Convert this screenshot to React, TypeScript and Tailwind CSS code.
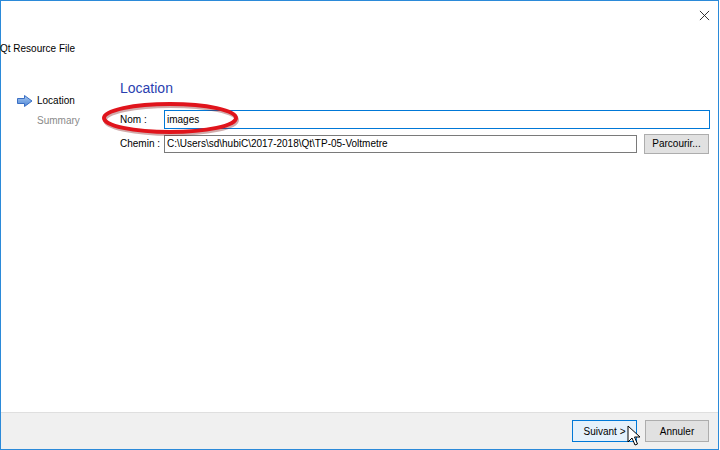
import { useState } from 'react'

const font = { fontFamily: '"Liberation Sans", Arial, sans-serif' }

export default function App() {
  const [name, setName] = useState('images')
  const [path, setPath] = useState('C:\\Users\\sd\\hubiC\\2017-2018\\Qt\\TP-05-Voltmetre')

  return (
    <div className="relative w-[720px] h-[450px] bg-white overflow-hidden" style={font}>
      <div className="w-[719px] h-[450px] border border-[#2b8ad9] flex flex-col">
        {/* title area */}
        <div className="relative h-[62px] shrink-0">
          <button className="absolute right-[7px] top-[8px] w-[12px] h-[12px] text-[#222]">
            <svg viewBox="0 0 12 12" className="w-[11px] h-[11px]" fill="none" stroke="currentColor" strokeWidth={1}>
              <path d="M1 1l10 10M11 1L1 11" />
            </svg>
          </button>
          <div className="absolute left-[-1px] top-[40px] text-[10px] text-black leading-[16px]">Qt Resource File</div>
        </div>

        <div className="flex flex-1">
          {/* sidebar */}
          <div className="w-[119px] shrink-0 pl-[16px] pt-[28px] text-[10px] leading-[20px]">
            <div className="flex items-center gap-[4px]">
              <svg width="16" height="12" viewBox="0 0 16 12">
                <defs>
                  <linearGradient id="ar" x1="0" y1="0" x2="0" y2="1">
                    <stop offset="0" stopColor="#a8c8f0" />
                    <stop offset="1" stopColor="#4d86d6" />
                  </linearGradient>
                </defs>
                <path d="M0.5 3.5h7v-3l7.5 5.5-7.5 5.5v-3h-7z" fill="url(#ar)" stroke="#3a6fc4" strokeWidth="1" />
              </svg>
              <span className="text-black">Location</span>
            </div>
            <div className="pl-[20px] text-[#8a8a8a]">Summary</div>
          </div>

          {/* content */}
          <div className="flex-1 pr-[8px] pt-[15px]">
            <div className="text-[14px] leading-[20px] text-[#2a3fb0] mb-[12px]">Location</div>
            <div className="flex items-center h-[19px] mb-[5px] text-[10px]">
              <label className="w-[44px] shrink-0 whitespace-nowrap">Nom :</label>
              <input
                value={name}
                onChange={(e) => setName(e.target.value)}
                className="flex-1 h-[19px] border border-[#0078d7] px-[2px] text-[10px] outline-none"
                style={font}
              />
            </div>
            <div className="flex items-center h-[19px] text-[10px]">
              <label className="w-[44px] shrink-0 whitespace-nowrap">Chemin :</label>
              <input
                value={path}
                onChange={(e) => setPath(e.target.value)}
                className="w-[473px] h-[18px] border border-[#7a7a7a] px-[2px] text-[10px] outline-none"
                style={font}
              />
              <button className="ml-[7px] w-[65px] h-[20px] border border-[#adadad] bg-[#e1e1e1] text-[10px]">
                Parcourir...
              </button>
            </div>
          </div>
        </div>

        {/* footer */}
        <div className="h-[37px] shrink-0 bg-[#f0f0f0] border-t border-[#dfdfdf] flex items-start justify-end gap-[8px] pr-[9px] pt-[7px] text-[10px]">
          <button className="w-[65px] h-[22px] border border-[#0078d7] bg-[#e5f1fb]">Suivant &gt;</button>
          <button className="w-[64px] h-[22px] border border-[#adadad] bg-[#e1e1e1]">Annuler</button>
        </div>
      </div>

      {/* red annotation ellipse */}
      <svg className="absolute left-[100px] top-[101px] pointer-events-none" width="142" height="36" viewBox="0 0 142 36">
        <ellipse cx="71" cy="19" rx="66" ry="14" fill="none" stroke="#7a1010" strokeOpacity="0.35" strokeWidth="4" />
        <ellipse cx="70" cy="17" rx="66" ry="14" fill="none" stroke="#e0141c" strokeWidth="4" />
      </svg>

      {/* mouse cursor */}
      <svg className="absolute left-[627px] top-[425px] pointer-events-none" width="14" height="22" viewBox="0 0 14 22">
        <path d="M1 1v16l4-4 3 7 2.5-1-3-7h5.5z" fill="white" stroke="black" strokeWidth="1" strokeLinejoin="miter" />
      </svg>
    </div>
  )
}
